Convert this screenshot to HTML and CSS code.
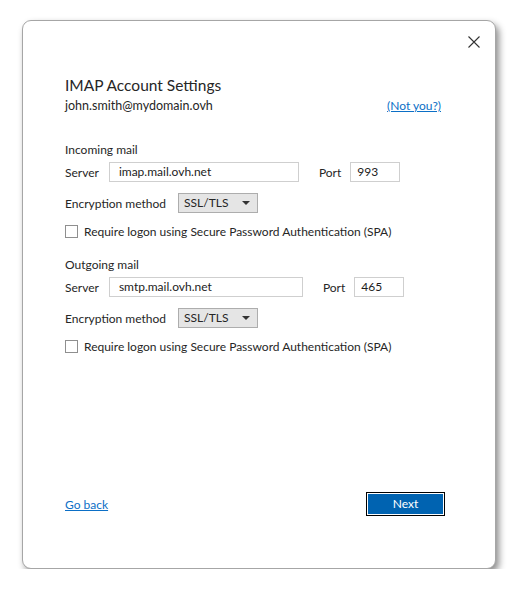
FILE: index.html
```html
<!DOCTYPE html>
<html>
<head>
<meta charset="utf-8">
<title>IMAP Account Settings</title>
<link rel="stylesheet" href="styles.css">
</head>
<body>
<div class="dialog">
  <div class="close">
    <svg width="12" height="12" viewBox="0 0 12 12"><path d="M0.5 0.5L11.5 11.5M11.5 0.5L0.5 11.5" stroke="#333" stroke-width="1.1" fill="none"/></svg>
  </div>
  <h1>IMAP Account Settings</h1>
  <div class="who">
    <span>john.smith@mydomain.ovh</span>
    <a href="#" class="link">(Not you?)</a>
  </div>

  <div class="group">
    <div class="caption">Incoming mail</div>
    <div class="row">
      <span class="lab">Server</span>
      <span class="field server">imap.mail.ovh.net</span>
      <span class="lab port">Port</span>
      <span class="field num">993</span>
    </div>
    <div class="row enc">
      <span class="lab">Encryption method</span>
      <span class="select">SSL/TLS <i class="caret"></i></span>
    </div>
    <div class="row check">
      <span class="box"></span>
      <span>Require logon using Secure Password Authentication (SPA)</span>
    </div>
  </div>

  <div class="group">
    <div class="caption">Outgoing mail</div>
    <div class="row">
      <span class="lab">Server</span>
      <span class="field server wide">smtp.mail.ovh.net</span>
      <span class="lab port">Port</span>
      <span class="field num">465</span>
    </div>
    <div class="row enc">
      <span class="lab">Encryption method</span>
      <span class="select">SSL/TLS <i class="caret"></i></span>
    </div>
    <div class="row check">
      <span class="box"></span>
      <span>Require logon using Secure Password Authentication (SPA)</span>
    </div>
  </div>

  <div class="footer">
    <a href="#" class="link back">Go back</a>
    <span class="next">Next</span>
  </div>
</div>
</body>
</html>
```

FILE: styles.css
```css
body {
  margin:0;
  background:#fff;
  font-family:Lato, "Noto Sans", sans-serif;
  font-size:12px;
  color:#262626;
}
.dialog {
  position:relative;
  margin:20px 0 0 22px;
  width:474px;
  height:549px;
  border:1px solid #a6a6a6;
  border-radius:9px;
  background:#fff;
  box-shadow:3px 4px 7px rgba(0,0,0,0.45);
  box-sizing:border-box;
  padding:54px 0 0 42px;
}
.close {
  position:absolute;
  top:15px;
  right:15px;
  width:12px;
  height:12px;
}
.close svg { display:block; }
h1 {
  margin:0;
  font-size:15.5px;
  font-weight:normal;
  line-height:20px;
  color:#262626;
}
.who {
  display:flex;
  justify-content:space-between;
  width:376px;
  margin-top:3px;
  line-height:16px;
  font-size:12.5px;
}
.who .link { font-size:12px; }
.link {
  color:#0b6fc6;
  text-decoration:underline;
}
.group {
  margin-top:28px;
}
.group + .group {
  margin-top:18px;
}
.caption {
  line-height:16px;
}
.row {
  display:flex;
  align-items:center;
}
.caption + .row {
  margin-top:4px;
}
.lab {
  margin-right:10px;
}
.lab.port {
  margin-left:20px;
  margin-right:9px;
}
.field {
  height:20px;
  box-sizing:border-box;
  border:1px solid #cfcfcf;
  padding:0 0 0 9px;
  line-height:18px;
  color:#1c1c1c;
  width:190px;
}
.field.wide { width:194px; }
.field.num { width:50px; padding-left:6px; }
.enc {
  margin-top:11px;
}
.enc .lab {
  margin-right:12px;
}
.select {
  display:flex;
  align-items:center;
  justify-content:space-between;
  width:80px;
  height:20px;
  box-sizing:border-box;
  border:1px solid #adadad;
  background:#e5e5e5;
  padding:0 7px 0 5px;
  line-height:18px;
}
.caret {
  width:0;
  height:0;
  border-left:4px solid transparent;
  border-right:4px solid transparent;
  border-top:4px solid #333;
}
.check {
  margin-top:11px;
}
.box {
  width:13px;
  height:13px;
  box-sizing:border-box;
  border:1px solid #8f8f8f;
  margin-right:6px;
}
.footer {
  position:absolute;
  left:42px;
  right:50px;
  top:471px;
  display:flex;
  justify-content:space-between;
  align-items:center;
}
.next {
  width:79px;
  height:24px;
  box-sizing:border-box;
  border:1px solid #000;
  box-shadow:inset 0 0 0 1px #fff;
  background:#0063b1;
  color:#fff;
  text-align:center;
  line-height:22px;
}
```
